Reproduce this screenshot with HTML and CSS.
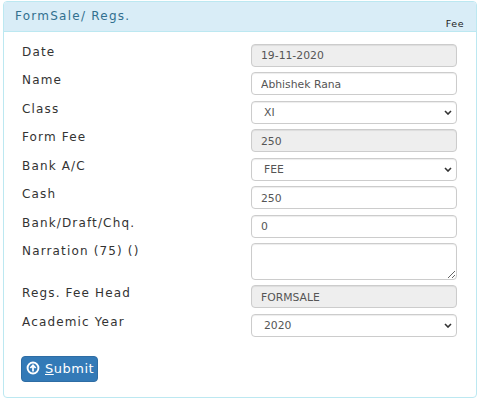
FILE: index.html
```html
<!DOCTYPE html>
<html lang="en">
<head>
<meta charset="utf-8">
<title>FormSale</title>
<link rel="stylesheet" href="styles.css">
</head>
<body>
<div class="panel">
  <div class="panel-heading">
    <span class="panel-title">FormSale/ Regs.</span>
    <span class="panel-tag">Fee</span>
  </div>
  <form class="panel-body">
    <div class="row"><label>Date</label><input class="ctl" value="19-11-2020" readonly disabled></div>
    <div class="row"><label>Name</label><input class="ctl" value="Abhishek Rana"></div>
    <div class="row"><label>Class</label><select class="ctl"><option>XI</option></select></div>
    <div class="row"><label>Form Fee</label><input class="ctl" value="250" disabled></div>
    <div class="row"><label>Bank A/C</label><select class="ctl"><option>FEE</option></select></div>
    <div class="row"><label>Cash</label><input class="ctl" value="250"></div>
    <div class="row"><label>Bank/Draft/Chq.</label><input class="ctl" value="0"></div>
    <div class="row"><label>Narration (75) ()</label><textarea class="ctl area"></textarea></div>
    <div class="row"><label>Regs. Fee Head</label><input class="ctl" value="FORMSALE" disabled></div>
    <div class="row"><label>Academic Year</label><select class="ctl"><option>2020</option></select></div>
    <button type="button" class="btn">
      <svg class="icon" viewBox="0 0 16 16" aria-hidden="true"><circle cx="8" cy="8" r="6.2" fill="none" stroke="#fff" stroke-width="2.2"/><path d="M8 12V5M5 8l3-3.2L11 8" fill="none" stroke="#fff" stroke-width="2"/></svg>
      <span><u>S</u>ubmit</span>
    </button>
  </form>
</div>
</body>
</html>
```
FILE: styles.css
```css
* { box-sizing: border-box; }
html, body { margin: 0; background: #fff; }
body { padding: 1px 3px 0 3px; font-family: "DejaVu Sans", Verdana, sans-serif; }
.panel {
  width: 474px;
  height: 397px;
  border: 1px solid #bce8f1;
  border-radius: 4px;
  overflow: hidden;
}
.panel-heading {
  height: 30px;
  background: #d9edf7;
  border-bottom: 1px solid #bce8f1;
  display: flex;
  justify-content: space-between;
  padding: 5px 12px 0 11px;
}
.panel-title { font-size: 12px; letter-spacing: 1.25px; color: #31708f; line-height: 18px; }
.panel-tag { font-size: 9.5px; letter-spacing: 0.5px; font-weight: 500; color: #222; margin-top: 11px; line-height: 12px; }
.panel-body { padding: 11.6px 19px 0 18px; }
.row { display: flex; justify-content: space-between; margin-bottom: 5.5px; }
.row label { font-size: 12px; letter-spacing: 1.15px; color: #333; line-height: 15px; padding-top: 1px; }
.ctl {
  width: 206px;
  height: 23px;
  border: 1px solid #ccc;
  border-radius: 4px;
  padding: 1px 9px 0;
  font: 10.8px "DejaVu Sans", Verdana, sans-serif;
  color: #555;
  background-color: #fff;
  margin: 0;
  display: block;
  box-shadow: inset 0 1px 1px rgba(0,0,0,.075);
}
.ctl:disabled { background: #eee; opacity: 1; color: #555; -webkit-text-fill-color: #555; }
select.ctl {
  padding: 1px 20px 0 12px;
  appearance: none;
  background-image: url("data:image/svg+xml,%3Csvg xmlns='http://www.w3.org/2000/svg' width='8' height='5' viewBox='0 0 8 5'%3E%3Cpath d='M1 1l3 3 3-3' fill='none' stroke='%23333' stroke-width='1.6'/%3E%3C/svg%3E");
  background-repeat: no-repeat;
  background-position: right 4px center;
}
.area { height: 36.5px; padding: 4px 9px; }
.btn {
  margin: 19px 0 0 -1px;
  width: 77px;
  height: 26px;
  background: #337ab7;
  border: 1px solid #2e6da4;
  border-radius: 4px;
  color: #fff;
  font: 13px "DejaVu Sans", Verdana, sans-serif;
  letter-spacing: 0.5px;
  display: flex;
  align-items: center;
  gap: 5px;
  padding: 0 0 0 4px;
}
.icon { width: 14px; height: 14px; flex: none; margin-top: -2px; }
```
